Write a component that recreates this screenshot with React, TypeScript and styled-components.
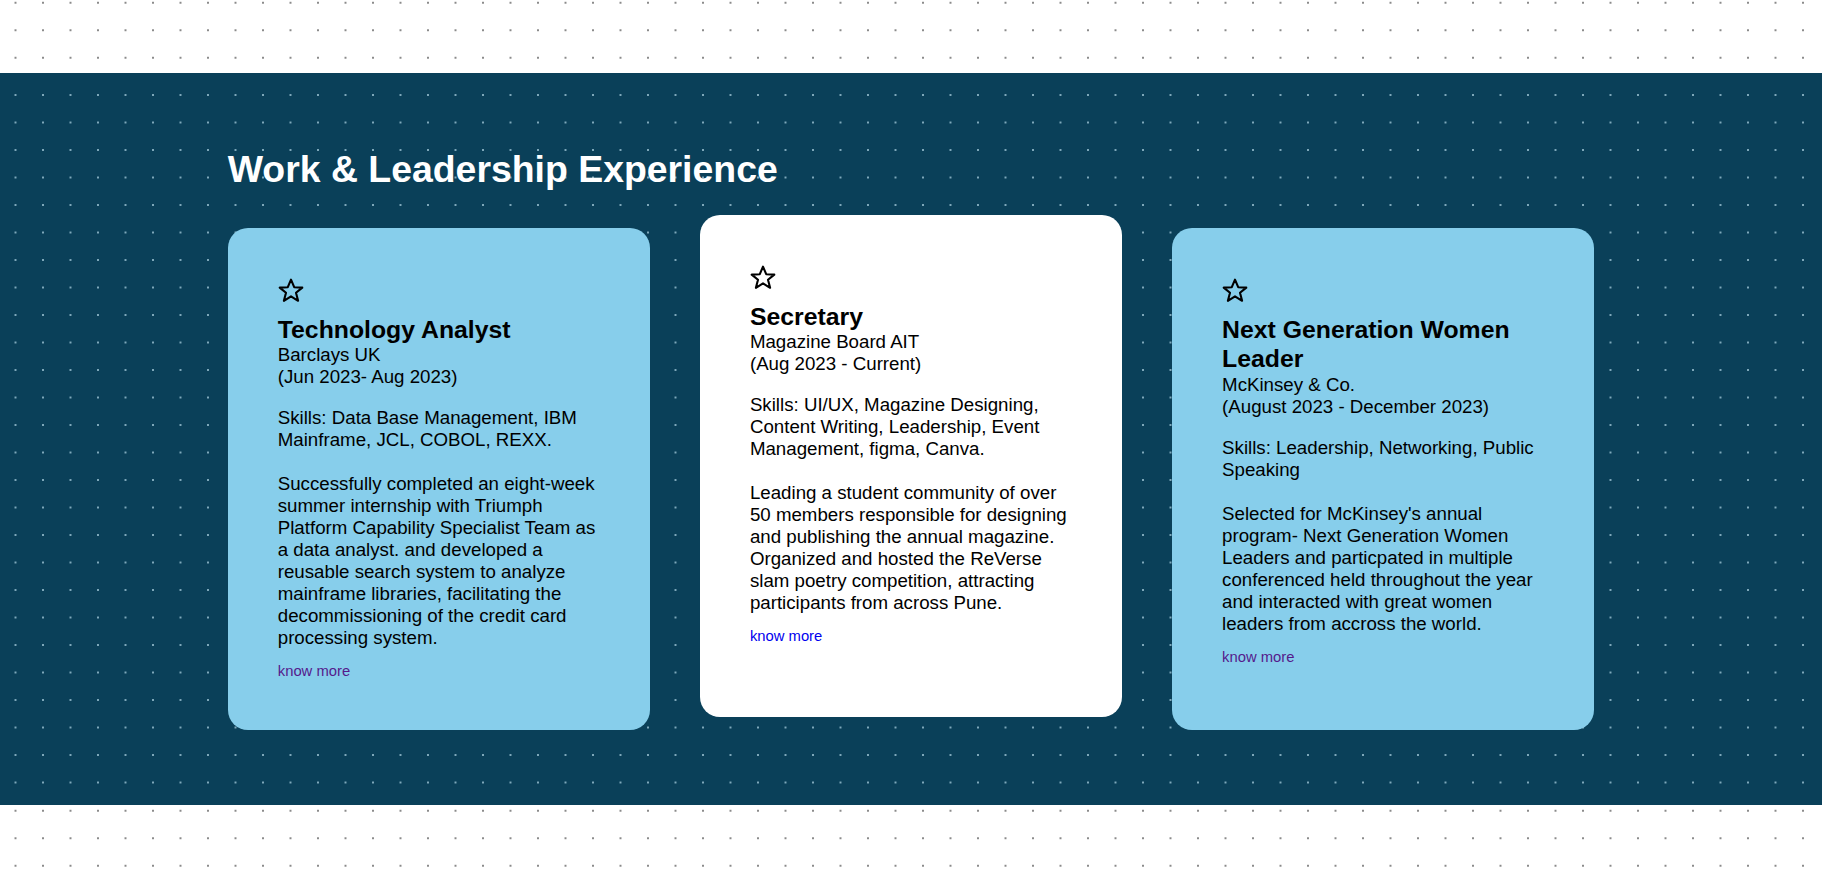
import React from "react";
import styled, { createGlobalStyle } from "styled-components";

const GlobalStyle = createGlobalStyle`
  html, body {
    margin: 0;
    padding: 0;
    background: #ffffff;
  }
  body {
    font-family: "Liberation Sans", Arial, sans-serif;
    color: #000;
  }
  * { box-sizing: border-box; }
`;

const Page = styled.div`
  display: flex;
  flex-direction: column;
  min-height: 882px;
`;

const WhiteBand = styled.div<{ $h: number; $offsetY: number }>`
  height: ${(p) => p.$h}px;
  background-color: #ffffff;
  background-image: radial-gradient(circle, #8a8a8a 0.9px, rgba(255, 255, 255, 0) 1.4px);
  background-size: 27.5px 27.5px;
  background-position: 1.75px ${(p) => p.$offsetY}px;
`;

const Section = styled.section`
  background-color: #0a4059;
  background-image: radial-gradient(circle, #7fa9bb 0.75px, rgba(10, 64, 89, 0) 1.25px);
  background-size: 27.5px 27.5px;
  background-position: 1.75px 8.25px;
  padding: 75px 0;
`;

const Container = styled.div`
  width: 75%;
  margin: 0 auto;
`;

const Heading = styled.h2`
  margin: 0 0 37px;
  color: #ffffff;
  font-size: 37.4px;
  font-weight: 700;
  line-height: normal;
`;

const Grid = styled.div`
  display: grid;
  grid-template-columns: repeat(3, 1fr);
  gap: 50px;
  align-items: stretch;
`;

const Card = styled.article<{ $active?: boolean }>`
  background: ${(p) => (p.$active ? "#ffffff" : "#87ceeb")};
  border-radius: 20px;
  padding: 50px 50px 36px;
  transform: ${(p) => (p.$active ? "translateY(-13px)" : "none")};
  display: flex;
  flex-direction: column;
`;

const StarIcon = styled.svg`
  display: block;
  width: 26px;
  height: 25px;
  margin: 0 0 12px;
`;

const Title = styled.h3`
  margin: 0;
  font-size: 24.8px;
  font-weight: 700;
  line-height: 29.4px;
`;

const Text = styled.p<{ $last?: boolean }>`
  margin: 0 0 ${(p) => (p.$last ? "0" : "19px")};
  font-size: 18.7px;
  line-height: 22px;
`;

const More = styled.p`
  margin: 14px 0 15px;
  font-size: 14.8px;
  line-height: normal;
`;

const MoreLink = styled.a<{ $visited?: boolean }>`
  color: ${(p) => (p.$visited ? "#551a8b" : "#0000ee")};
  text-decoration: none;
`;

const Star = () => (
  <StarIcon viewBox="0 0 26 25" aria-hidden="true">
    <polygon
      points="13,1.6 16.2,9.2 24.3,9.6 18,14.8 20.1,22.8 13,18.3 5.9,22.8 8,14.8 1.7,9.6 9.8,9.2"
      fill="none"
      stroke="#000"
      strokeWidth="2.1"
      strokeLinejoin="round"
    />
  </StarIcon>
);

type Item = {
  title: string;
  org: string;
  period: string;
  skills: string;
  desc: string;
  active?: boolean;
};

const items: Item[] = [
  {
    title: "Technology Analyst",
    org: "Barclays UK",
    period: "(Jun 2023- Aug 2023)",
    skills: "Skills: Data Base Management, IBM Mainframe, JCL, COBOL, REXX.",
    desc:
      "Successfully completed an eight-week summer internship with Triumph Platform Capability Specialist Team as a data analyst. and developed a reusable search system to analyze mainframe libraries, facilitating the decommissioning of the credit card processing system.",
  },
  {
    title: "Secretary",
    org: "Magazine Board AIT",
    period: "(Aug 2023 - Current)",
    skills:
      "Skills: UI/UX, Magazine Designing, Content Writing, Leadership, Event Management, figma, Canva.",
    desc:
      "Leading a student community of over 50 members responsible for designing and publishing the annual magazine. Organized and hosted the ReVerse slam poetry competition, attracting participants from across Pune.",
    active: true,
  },
  {
    title: "Next Generation Women Leader",
    org: "McKinsey & Co.",
    period: "(August 2023 - December 2023)",
    skills: "Skills: Leadership, Networking, Public Speaking",
    desc:
      "Selected for McKinsey's annual program- Next Generation Women Leaders and particpated in multiple conferenced held throughout the year and interacted with great women leaders from accross the world.",
  },
];

export default function App() {
  return (
    <>
      <GlobalStyle />
      <Page>
        <WhiteBand $h={73} $offsetY={-11} />
        <Section>
          <Container>
            <Heading>Work &amp; Leadership Experience</Heading>
            <Grid>
              {items.map((it) => (
                <Card key={it.title} $active={it.active}>
                  <Star />
                  <Title>{it.title}</Title>
                  <Text>
                    {it.org}
                    <br />
                    {it.period}
                  </Text>
                  <Text $last>
                    {it.skills}
                    <br />
                    <br />
                    {it.desc}
                  </Text>
                  <More>
                    <MoreLink href="#" $visited={!it.active}>
                      know more
                    </MoreLink>
                  </More>
                </Card>
              ))}
            </Grid>
          </Container>
        </Section>
        <WhiteBand $h={76} $offsetY={-8} />
      </Page>
    </>
  );
}
